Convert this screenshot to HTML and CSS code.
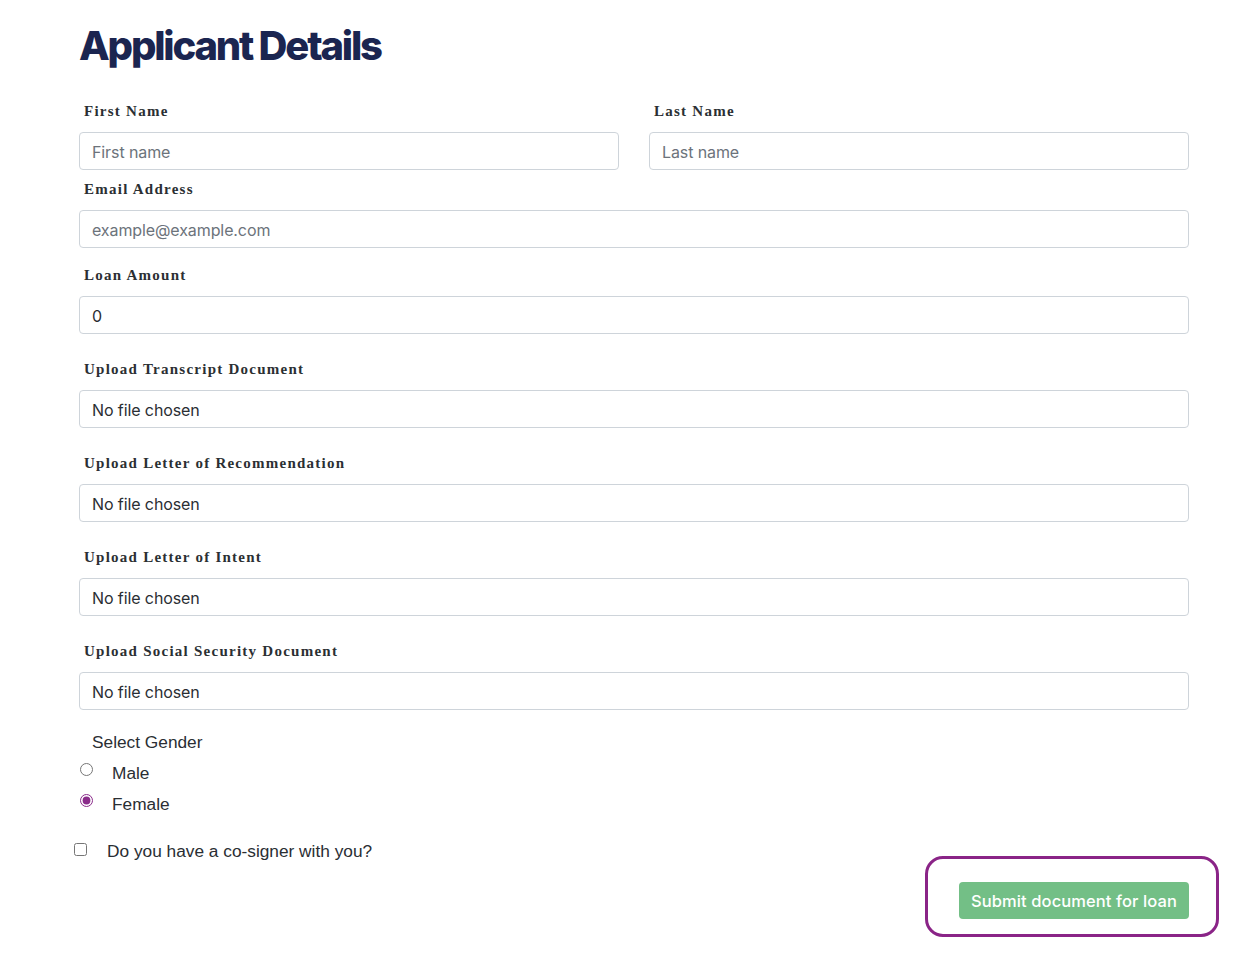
FILE: index.html
```html
<!DOCTYPE html>
<html lang="en">
<head>
<meta charset="utf-8">
<title>Applicant Details</title>
<link rel="stylesheet" href="styles.css">
</head>
<body>
<main class="page">
  <h1 class="title">Applicant Details</h1>
  <form class="form">
    <div class="row-2">
      <div class="field">
        <label class="label">First Name</label>
        <div class="input placeholder">First name</div>
      </div>
      <div class="field">
        <label class="label">Last Name</label>
        <div class="input placeholder">Last name</div>
      </div>
    </div>
    <div class="field f-email">
      <label class="label">Email Address</label>
      <div class="input placeholder">example@example.com</div>
    </div>
    <div class="field f-loan">
      <label class="label">Loan Amount</label>
      <div class="input value">0</div>
    </div>
    <div class="field f-upload">
      <label class="label">Upload Transcript Document</label>
      <div class="input value">No file chosen</div>
    </div>
    <div class="field f-upload">
      <label class="label">Upload Letter of Recommendation</label>
      <div class="input value">No file chosen</div>
    </div>
    <div class="field f-upload">
      <label class="label">Upload Letter of Intent</label>
      <div class="input value">No file chosen</div>
    </div>
    <div class="field f-upload">
      <label class="label">Upload Social Security Document</label>
      <div class="input value">No file chosen</div>
    </div>

    <div class="gender">
      <div class="gender-title">Select Gender</div>
      <label class="radio-row"><input type="radio" name="g" class="radio"><span>Male</span></label>
      <label class="radio-row"><input type="radio" name="g" class="radio" checked><span>Female</span></label>
    </div>

    <label class="check-row"><input type="checkbox" class="check"><span>Do you have a co-signer with you?</span></label>

    <div class="actions">
      <div class="ring"></div>
      <button type="button" class="submit">Submit document for loan</button>
    </div>
  </form>
</main>
</body>
</html>
```
FILE: styles.css
```css
* { box-sizing: border-box; }
html, body { margin: 0; padding: 0; background: #fff; }
body { font-family: "Liberation Sans", Arial, sans-serif; color: #212529; min-height: 972px; }

.page { width: 1110px; margin-left: 79px; padding-top: 22px; padding-bottom: 53px; }

.title {
  margin: 0;
  font-family: Inter, "Noto Sans", sans-serif;
  font-weight: 800;
  font-size: 40px;
  line-height: 48px;
  letter-spacing: -2.2px;
  color: #1b2550;
}

.form { display: flex; flex-direction: column; margin-top: 31px; }

.row-2 { display: grid; grid-template-columns: 1fr 1fr; column-gap: 30px; }

.field { display: flex; flex-direction: column; }
.f-email { margin-top: 9px; }
.f-loan { margin-top: 17px; }
.f-upload { margin-top: 25px; }

.label {
  display: block;
  padding-left: 5px;
  font-family: "Liberation Serif", "Times New Roman", serif;
  font-weight: bold;
  font-size: 15px;
  line-height: 20px;
  letter-spacing: 1.25px;
  color: #2b2f33;
  margin-bottom: 11px;
}

.input {
  height: 38px;
  border: 1px solid #ced4da;
  border-radius: 4px;
  padding: 1px 12px 0;
  display: flex;
  align-items: center;
  font-family: Inter, "Noto Sans", sans-serif;
  font-size: 16px;
  letter-spacing: -0.1px;
}
.placeholder { color: #6c737b; }
.value { color: #2a2e33; }

.gender { margin-top: 21px; display: flex; flex-direction: column; }
.gender-title { padding-left: 13px; font-size: 17.3px; line-height: 22px; color: #2a2e33; }
.radio-row { display: flex; align-items: center; height: 31px; font-size: 17.3px; color: #2a2e33; }
.radio-row:first-of-type { margin-top: 5px; }
.radio {
  width: 13px; height: 13px;
  margin: -9px 19px 0 1px;
  accent-color: #8a2b8a;
}

.check-row { display: flex; align-items: center; margin-top: 20px; margin-left: -5px; height: 22px; font-size: 17.3px; color: #2a2e33; }
.check { width: 13px; height: 13px; margin: -3px 20px 0 0; }

.actions { position: relative; display: flex; justify-content: flex-end; margin-top: 20px; }
.submit {
  width: 230px; height: 37px;
  border: 0; border-radius: 4px;
  background: #73bf86;
  color: #fff;
  font-family: Inter, "Noto Sans", sans-serif;
  font-size: 16.5px;
  font-weight: 500;
  letter-spacing: 0.1px;
  padding: 0;
}
.ring {
  position: absolute;
  right: -30px; top: -26px;
  width: 294px; height: 81px;
  border: 3px solid #8a2487;
  border-radius: 18px;
}
```
